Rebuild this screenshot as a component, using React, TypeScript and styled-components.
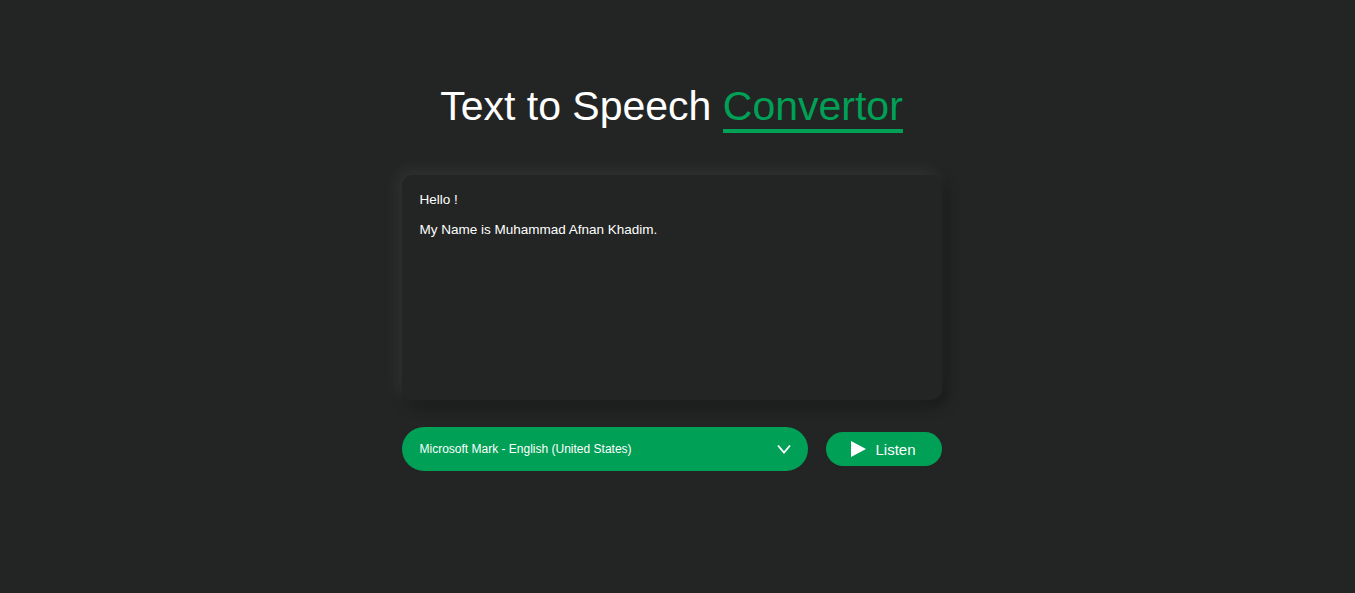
import React from "react";
import styled, { createGlobalStyle } from "styled-components";

const Global = createGlobalStyle`
  html, body { margin: 0; padding: 0; background: #232524; }
  body { font-family: "Liberation Sans", Arial, sans-serif; color: #fff; }
  * { box-sizing: border-box; }
`;

const Page = styled.main`
  min-height: 593px;
  display: flex;
  flex-direction: column;
  align-items: center;
  padding: 78px 12px 0 0;
`;

const Title = styled.h1`
  margin: 0;
  font-size: 41px;
  font-weight: 400;
  line-height: 56px;
  color: #fff;
`;

const Accent = styled.span`
  color: #00a056;
  border-bottom: 4px solid #00a056;
`;

const Card = styled.div`
  margin-top: 41px;
  width: 540px;
  display: flex;
  flex-direction: column;
`;

const TextBox = styled.textarea`
  width: 540px;
  height: 225px;
  resize: none;
  border: none;
  outline: none;
  border-radius: 10px;
  background: #232524;
  color: #fff;
  font-family: "Liberation Sans", Arial, sans-serif;
  font-size: 13.5px;
  line-height: 30px;
  padding: 10px 18px;
  box-shadow: -4px -4px 16px rgba(255, 255, 255, 0.08), 4px 6px 14px rgba(0, 0, 0, 0.35);
`;

const Row = styled.div`
  margin-top: 27px;
  display: flex;
  align-items: center;
  gap: 18px;
`;

const Select = styled.div`
  width: 406px;
  height: 44px;
  border-radius: 22px;
  background: #00a056;
  display: flex;
  align-items: center;
  justify-content: space-between;
  padding: 0 17px 0 18px;
  font-size: 12px;
  color: #fff;
`;

const Button = styled.button`
  width: 116px;
  height: 34px;
  border-radius: 17px;
  border: none;
  background: #00a056;
  color: #fff;
  font-family: "Liberation Sans", Arial, sans-serif;
  font-size: 15px;
  display: flex;
  align-items: center;
  justify-content: center;
  gap: 9px;
  padding: 0;
  cursor: pointer;
`;

export default function App() {
  return (
    <>
      <Global />
      <Page>
        <Title>
          Text to Speech <Accent>Convertor</Accent>
        </Title>
        <Card>
          <TextBox defaultValue={"Hello !\nMy Name is Muhammad Afnan Khadim."} />
          <Row>
            <Select>
              <span>Microsoft Mark - English (United States)</span>
              <svg width="14" height="10" viewBox="0 0 14 10">
                <path d="M1 1.5 L7 8.5 L13 1.5" fill="none" stroke="#fff" strokeWidth="1.8" />
              </svg>
            </Select>
            <Button>
              <svg width="15" height="16" viewBox="0 0 15 16">
                <path d="M0 0 L15 8 L0 16 Z" fill="#fff" />
              </svg>
              Listen
            </Button>
          </Row>
        </Card>
      </Page>
    </>
  );
}
